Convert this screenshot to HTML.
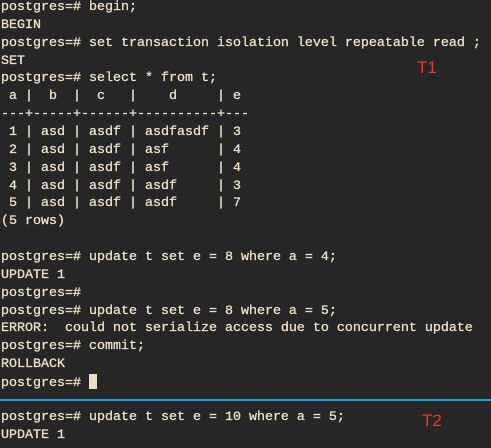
<html><head><style>
body{margin:0;width:491px;height:448px;background:#262626;overflow:hidden;position:relative}
pre{margin:0;position:absolute;left:1px;font-family:"Liberation Mono",monospace;font-size:13.33px;line-height:17.86px;color:#eee2c6;white-space:pre;-webkit-text-stroke:0.3px #eee2c6}
.t{position:absolute;color:#e8392a;font-family:"Liberation Sans",sans-serif;font-size:17px}
.cur{display:inline-block;width:8px;height:15px;background:#eadfc4;vertical-align:-3px}
</style></head><body>
<pre style="top:-1px">postgres=# begin;
BEGIN
postgres=# set transaction isolation level repeatable read ;
SET
postgres=# select * from t;
 a |  b  |  c   |    d     | e
---+-----+------+----------+---
 1 | asd | asdf | asdfasdf | 3
 2 | asd | asdf | asf      | 4
 3 | asd | asdf | asf      | 4
 4 | asd | asdf | asdf     | 3
 5 | asd | asdf | asdf     | 7
(5 rows)

postgres=# update t set e = 8 where a = 4;
UPDATE 1
postgres=#
postgres=# update t set e = 8 where a = 5;
ERROR:  could not serialize access due to concurrent update
postgres=# commit;
ROLLBACK
postgres=# <span class="cur"></span></pre>
<div style="position:absolute;left:0;top:399px;width:491px;height:2px;background:#1da1e6"></div>
<pre style="top:409px">postgres=# update t set e = 10 where a = 5;
UPDATE 1</pre>
<div class="t" style="left:417px;top:58px">T1</div>
<div class="t" style="left:422px;top:411px">T2</div>
</body></html>
